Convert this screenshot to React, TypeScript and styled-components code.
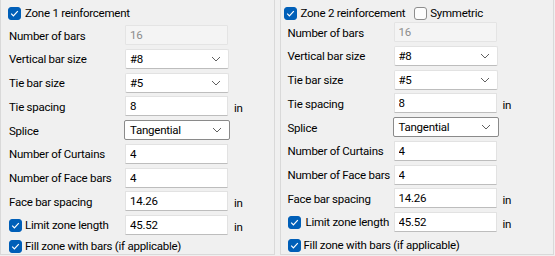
import React from 'react';
import styled, { createGlobalStyle } from 'styled-components';

const colors = {
  face: '#f0f0f0',
  groupLine: '#d9d9d9',
  text: '#000000',
  disabledText: '#8c8c8c',
  field: '#ffffff',
  fieldBorder: '#e2e2e2',
  fieldBottom: '#bdbdbd',
  strongBorder: '#8a8a8a',
  accent: '#005fb8',
  chevron: '#606060',
};

const GlobalStyle = createGlobalStyle`
  html, body {
    margin: 0;
    padding: 0;
    background: ${colors.face};
  }
  body {
    font-family: Roboto, 'Liberation Sans', sans-serif;
    font-size: 11.5px;
    letter-spacing: -0.25px;
    color: ${colors.text};
  }
`;

type Row =
  | { kind: 'input'; label: string; value: string; disabled?: boolean; unit?: string }
  | { kind: 'select'; label: string; value: string; strong?: boolean }
  | { kind: 'check'; label: string; value: string; unit?: string };

const rows: Row[] = [
  { kind: 'input', label: 'Number of bars', value: '16', disabled: true },
  { kind: 'select', label: 'Vertical bar size', value: '#8' },
  { kind: 'select', label: 'Tie bar size', value: '#5' },
  { kind: 'input', label: 'Tie spacing', value: '8', unit: 'in' },
  { kind: 'select', label: 'Splice', value: 'Tangential', strong: true },
  { kind: 'input', label: 'Number of Curtains', value: '4' },
  { kind: 'input', label: 'Number of Face bars', value: '4' },
  { kind: 'input', label: 'Face bar spacing', value: '14.26', unit: 'in' },
  { kind: 'check', label: 'Limit zone length', value: '45.52', unit: 'in' },
];

const CheckMark = () => (
  <svg width="9" height="9" viewBox="0 0 9 9">
    <polyline points="1.2,4.6 3.4,6.8 7.8,2.2" fill="none" stroke="#fff" strokeWidth="1.2" />
  </svg>
);

const Chevron = () => (
  <svg width="10" height="6" viewBox="0 0 10 6">
    <polyline points="1,1 5,5 9,1" fill="none" stroke={colors.chevron} strokeWidth="1" />
  </svg>
);

const CheckBox = ({ checked }: { checked: boolean }) => (
  <SBox $checked={checked}>{checked && <CheckMark />}</SBox>
);

type ZoneProps = {
  title: string;
  headerX: number;
  labelX: number;
  labelCol: number;
  bodyTop: number;
  fillTop: number;
  symmetric?: boolean;
};

const ZonePanel = ({ title, headerX, labelX, labelCol, bodyTop, fillTop, symmetric }: ZoneProps) => (
  <SPanel>
    <SHeader $x={headerX}>
      <SCheckLabel>
        <CheckBox checked />
        {title}
      </SCheckLabel>
      {symmetric && (
        <SCheckLabel $gap={3}>
          <CheckBox checked={false} />
          Symmetric
        </SCheckLabel>
      )}
    </SHeader>
    <SGrid $x={labelX} $labelCol={labelCol} $top={bodyTop}>
      {rows.map((row) => (
        <React.Fragment key={row.label}>
          {row.kind === 'check' ? (
            <SCheckLabel $gap={symmetric ? 5 : 3}>
              <CheckBox checked />
              {row.label}
            </SCheckLabel>
          ) : (
            <SLabel>{row.label}</SLabel>
          )}
          {row.kind === 'select' ? (
            <SSelect $strong={row.strong}>
              <span>{row.value}</span>
              <Chevron />
            </SSelect>
          ) : (
            <SInput
              readOnly
              value={row.value}
              disabled={row.kind === 'input' && row.disabled}
            />
          )}
          <SUnit>{'unit' in row ? row.unit : ''}</SUnit>
        </React.Fragment>
      ))}
    </SGrid>
    <SFill $x={labelX} $top={fillTop}>
      <SCheckLabel $gap={3}>
        <CheckBox checked />
        Fill zone with bars (if applicable)
      </SCheckLabel>
    </SFill>
  </SPanel>
);

export default function App() {
  return (
    <>
      <GlobalStyle />
      <SPage>
        <ZonePanel
          title="Zone 1 reinforcement"
          headerX={7}
          labelX={8}
          labelCol={116}
          bodyTop={3}
          fillTop={3}
        />
        <ZonePanel
          title="Zone 2 reinforcement"
          headerX={3}
          labelX={7}
          labelCol={106}
          bodyTop={0}
          fillTop={5}
          symmetric
        />
      </SPage>
    </>
  );
}

const SPage = styled.div`
  display: flex;
  gap: 5px;
  width: 555px;
  height: 256px;
  box-sizing: border-box;
  padding-right: 1px;
  background: ${colors.face};
`;

const SPanel = styled.section`
  flex: 1;
  height: 255px;
  box-sizing: border-box;
  border: 1px solid ${colors.groupLine};
  border-top: none;
  display: flex;
  flex-direction: column;
`;

const SHeader = styled.div<{ $x: number }>`
  display: flex;
  align-items: center;
  gap: 9px;
  height: 18px;
  margin-top: 4px;
  padding-left: ${(p) => p.$x}px;
`;

const SCheckLabel = styled.label<{ $gap?: number }>`
  display: flex;
  align-items: center;
  gap: ${(p) => p.$gap ?? 4}px;
  white-space: nowrap;
  line-height: 16px;
`;

const SBox = styled.span<{ $checked: boolean }>`
  width: 13px;
  height: 13px;
  box-sizing: border-box;
  border-radius: 3px;
  display: inline-flex;
  align-items: center;
  justify-content: center;
  flex: none;
  background: ${(p) => (p.$checked ? colors.accent : '#fdfdfd')};
  border: 1px solid ${(p) => (p.$checked ? colors.accent : '#8d8d8d')};
`;

const SGrid = styled.div<{ $x: number; $labelCol: number; $top: number }>`
  display: grid;
  grid-template-columns: ${(p) => p.$labelCol}px 104px 1fr;
  grid-auto-rows: 20px;
  row-gap: 3.75px;
  align-items: center;
  padding: ${(p) => p.$top}px 0 0 ${(p) => p.$x}px;
`;

const SLabel = styled.span`
  white-space: nowrap;
  line-height: 16px;
  padding-top: 1px;
`;

const SUnit = styled.span`
  padding-left: 5px;
  padding-top: 3px;
`;

const SInput = styled.input`
  box-sizing: border-box;
  width: 103px;
  height: 20px;
  margin: 0;
  padding: 0 4px;
  font: inherit;
  letter-spacing: inherit;
  color: ${colors.text};
  background: ${colors.field};
  border: 1px solid ${colors.fieldBorder};
  border-bottom-color: ${colors.fieldBottom};
  border-radius: 1px;
  outline: none;

  &:disabled {
    color: ${colors.disabledText};
    background: #f4f4f4;
    border-color: #e4e4e4;
  }
`;

const SSelect = styled.div<{ $strong?: boolean }>`
  box-sizing: border-box;
  width: ${(p) => (p.$strong ? 106 : 104)}px;
  height: 20px;
  margin-left: ${(p) => (p.$strong ? -1 : 0)}px;
  display: flex;
  align-items: center;
  justify-content: space-between;
  padding: 0 7px 0 ${(p) => (p.$strong ? 5 : 4)}px;
  background: ${colors.field};
  border: 1px solid ${(p) => (p.$strong ? colors.strongBorder : colors.fieldBorder)};
  border-bottom-color: ${(p) => (p.$strong ? colors.strongBorder : colors.fieldBottom)};
  border-radius: 2px;
`;

const SFill = styled.div<{ $x: number; $top: number }>`
  display: flex;
  padding-left: ${(p) => p.$x}px;
  margin-top: ${(p) => p.$top}px;
`;
